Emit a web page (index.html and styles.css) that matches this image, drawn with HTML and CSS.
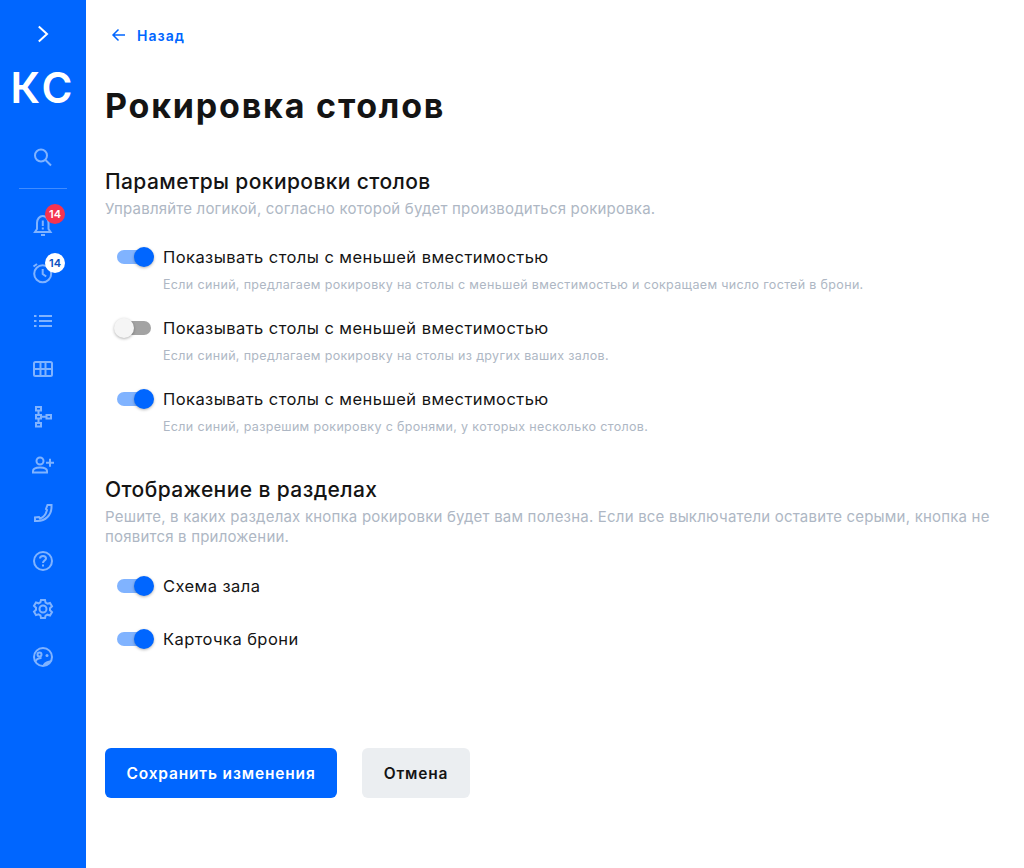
FILE: index.html
```html
<!DOCTYPE html>
<html lang="ru">
<head>
<meta charset="utf-8">
<title>Рокировка столов</title>
<link rel="stylesheet" href="styles.css">
</head>
<body>
<div class="app">
  <nav class="sidebar">
    <div class="nav-item chevron"><svg width="24" height="24" viewBox="0 0 24 24" fill="none" stroke="#fff" stroke-width="2"><path d="M7.800 4.500 16 12l-8.200 7.500"/></svg></div>
    <div class="logo">КС</div>
    <div class="nav-item"><svg width="24" height="24" viewBox="0 0 24 24" fill="none" stroke="currentColor" stroke-width="2"><circle cx="10" cy="10.500" r="6"/><path d="m14.500 15 5.500 5.500"/></svg></div>
    <div class="divider"></div>
    <div class="nav-list">
      <div class="nav-item"><svg width="24" height="24" viewBox="0 0 24 24" fill="none" stroke="currentColor" stroke-width="2"><path d="M4 19h15.500l-2-3v-6c0-4-2.500-7-5.700-7S6 6 6 10v6z"/><path d="M11.800 7.500V13M11.800 14.500v2M10 22h4"/></svg><span class="badge badge-red">14</span></div>
      <div class="nav-item"><svg width="24" height="24" viewBox="0 0 24 24" fill="none" stroke="currentColor" stroke-width="2"><circle cx="11.700" cy="12.700" r="8.500"/><path d="M11.700 8v5l3.500 2.500M2.500 5.500 6 3"/></svg><span class="badge badge-white">14</span></div>
      <div class="nav-item"><svg width="24" height="24" viewBox="0 0 24 24" fill="none" stroke="currentColor" stroke-width="2"><path d="M8 7h13M8 12h13M8 17h13M3 7h2.500M3 12h2.500M3 17h2.500"/></svg></div>
      <div class="nav-item"><svg width="24" height="24" viewBox="0 0 24 24" fill="none" stroke="currentColor" stroke-width="2"><rect x="3" y="5" width="18" height="14" rx="1.500"/><path d="M3 12h18M9.500 5v14M14.500 5v14"/></svg></div>
      <div class="nav-item"><svg width="24" height="24" viewBox="0 0 24 24" fill="none" stroke="currentColor" stroke-width="2"><rect x="5" y="2" width="5" height="3.500"/><rect x="5" y="10" width="5" height="3.500"/><rect x="5" y="18" width="5" height="3.500"/><rect x="15.500" y="10" width="4.500" height="3.500"/><path d="M7.500 5.500V10M7.500 13.500V18M10 11.700h5.500"/></svg></div>
      <div class="nav-item"><svg width="24" height="24" viewBox="0 0 24 24" fill="none" stroke="currentColor" stroke-width="2"><circle cx="9" cy="8" r="3.500"/><path d="M2 19.500v-1.500c0-2.500 3.500-3.500 7-3.500s7 1 7 3.500v1.500zM15 9.700h8M19 5.700v8"/></svg></div>
      <div class="nav-item"><svg width="24" height="24" viewBox="0 0 24 24" fill="none" stroke="currentColor" stroke-width="2"><path d="M16.500 4h4v2c0 8-6 14-14 14H4v-3.500l4-.5 1 1.500c3.500-1 6-4.500 7-8.500l-1-1z"/></svg></div>
      <div class="nav-item"><svg width="24" height="24" viewBox="0 0 24 24" fill="none" stroke="currentColor" stroke-width="2"><circle cx="12" cy="12" r="9"/><path d="M9 9.500C9 7.800 10.300 7 12 7s3 1 3 2.500c0 2-3 2.200-3 4.500M12 15.500v2"/></svg></div>
      <div class="nav-item"><svg width="24" height="24" viewBox="0 0 24 24" fill="none" stroke="currentColor" stroke-width="2"><circle cx="12" cy="12" r="3.500"/><path d="M10 3h4l.6 2.700 1.800 1 2.600-.8 2 3.400-2 1.900v2l2 1.900-2 3.400-2.600-.8-1.800 1L14 21h-4l-.6-2.700-1.800-1-2.600.8-2-3.400 2-1.900v-2l-2-1.900 2-3.400 2.600.8 1.800-1z"/></svg></div>
      <div class="nav-item"><svg width="24" height="24" viewBox="0 0 24 24" fill="none" stroke="currentColor" stroke-width="2"><circle cx="12" cy="12" r="9"/><circle cx="8.500" cy="9.500" r="2"/><circle cx="16" cy="10.500" r="1.500" fill="currentColor" stroke="none"/><path d="M4.500 16.500c1-2.500 3-3.500 6-3.500"/><path d="M11.500 21c.5-3 3.500-5.500 9-5.500-1.500 3.500-5 5.500-9 5.500z" fill="currentColor" stroke="none"/></svg></div>
    </div>
  </nav>
  <main class="content">
    <a class="back" href="#"><svg width="16" height="16" viewBox="0 0 16 16" fill="none" stroke="#0066ff" stroke-width="1.500"><path d="M14 8H2.500M7.500 2.500 2 8l5.500 5.500"/></svg><span>Назад</span></a>
    <h1 class="title">Рокировка столов</h1>

    <section class="group group-first">
      <h2 class="heading">Параметры рокировки столов</h2>
      <p class="desc">Управляйте логикой, согласно которой будет производиться рокировка.</p>
      <div class="option option-1">
        <div class="row"><span class="toggle on"></span><span class="label">Показывать столы с меньшей вместимостью</span></div>
        <p class="hint">Если синий, предлагаем рокировку на столы с меньшей вместимостью и сокращаем число гостей в брони.</p>
      </div>
      <div class="option option-2">
        <div class="row"><span class="toggle off"></span><span class="label">Показывать столы с меньшей вместимостью</span></div>
        <p class="hint">Если синий, предлагаем рокировку на столы из других ваших залов.</p>
      </div>
      <div class="option option-3">
        <div class="row"><span class="toggle on"></span><span class="label">Показывать столы с меньшей вместимостью</span></div>
        <p class="hint">Если синий, разрешим рокировку с бронями, у которых несколько столов.</p>
      </div>
    </section>

    <section class="group group-second">
      <h2 class="heading">Отображение в разделах</h2>
      <p class="desc desc-wrap">Решите, в каких разделах кнопка рокировки будет вам полезна. Если все выключатели оставите серыми, кнопка не появится в приложении.</p>
      <div class="simple-list">
        <div class="row"><span class="toggle on"></span><span class="label">Схема зала</span></div>
        <div class="row"><span class="toggle on"></span><span class="label">Карточка брони</span></div>
      </div>
    </section>

    <div class="actions">
      <button class="btn btn-primary">Сохранить изменения</button>
      <button class="btn btn-secondary">Отмена</button>
    </div>
  </main>
</div>
</body>
</html>
```

FILE: styles.css
```css
* { box-sizing: border-box; }
html, body { margin: 0; padding: 0; height: 100%; }
body { font-family: "Inter", "Noto Sans", sans-serif; background: #fff; color: #111; }
.app { display: flex; min-height: 868px; }

.sidebar { width: 86px; flex: none; background: #0066ff; color: #80b3ff; display: flex; flex-direction: column; align-items: center; padding-top: 22px; }
.nav-item { position: relative; width: 24px; height: 24px; }
.nav-item svg { display: block; }
.logo { color: #fff; font-size: 42px; font-weight: 600; line-height: 48px; margin-top: 18px; margin-bottom: 33px; letter-spacing: 3px; }
.divider { width: 48px; height: 1px; background: rgba(255,255,255,.25); margin-top: 19px; margin-bottom: 24px; }
.nav-list { display: flex; flex-direction: column; gap: 24px; }
.badge { position: absolute; left: 14px; width: 20px; height: 20px; border-radius: 50%; font-size: 11px; font-weight: 600; line-height: 20px; text-align: center; }
.badge-red { top: -9px; background: #f5334f; color: #fff; }
.badge-white { top: -8px; background: #fff; color: #0a4fc0; }

.content { flex: 1; min-width: 0; padding: 26px 32px 0 19px; }
.back { display: flex; align-items: center; gap: 10px; margin-left: 6px; height: 18px; color: #0066ff; font-size: 14px; font-weight: 600; text-decoration: none; letter-spacing: 1px; }
.title { margin: 40px 0 0; font-size: 34px; line-height: 44px; font-weight: 700; letter-spacing: 1.8px; color: #141414; }
.group-first { margin-top: 41px; }
.group-second { margin-top: 42px; }
.heading { margin: 0; font-size: 21px; line-height: 26px; font-weight: 500; letter-spacing: 0.4px; color: #141414; }
.desc { margin: 4px 0 0; font-size: 15px; line-height: 20px; color: #aeb7c4; letter-spacing: 0.2px; }
.option { padding-left: 12px; }
.option-1 { margin-top: 26px; }
.option-2, .option-3 { margin-top: 23px; }
.row { display: flex; align-items: center; gap: 12px; height: 24px; }
.label { font-size: 16.5px; line-height: 24px; letter-spacing: 0.43px; color: #141414; }
.hint { margin: 8px 0 0 46px; font-size: 12.5px; line-height: 16px; color: #aeb7c4; letter-spacing: 0.34px; }
.toggle { position: relative; flex: none; width: 34px; height: 14px; border-radius: 7px; }
.toggle::after { content: ""; position: absolute; top: -3px; width: 20px; height: 20px; border-radius: 50%; box-shadow: 0 1px 3px rgba(0,0,0,.3); }
.toggle.on { background: #80b3ff; }
.toggle.on::after { right: -3px; background: #0066ff; }
.toggle.off { background: #a3a3a3; }
.toggle.off::after { left: -3px; background: #f5f5f5; }
.simple-list { display: flex; flex-direction: column; gap: 29px; margin-top: 27px; padding-left: 12px; }
.actions { display: flex; gap: 25px; margin-top: 97px; }
.btn { height: 50px; border: 0; border-radius: 6px; font-family: inherit; font-size: 15.5px; font-weight: 600; letter-spacing: 0.84px; padding: 0; white-space: nowrap; }
.btn-primary { width: 232px; background: #0066ff; color: #fff; }
.btn-secondary { width: 108px; background: #ebeef1; color: #141414; }
```
